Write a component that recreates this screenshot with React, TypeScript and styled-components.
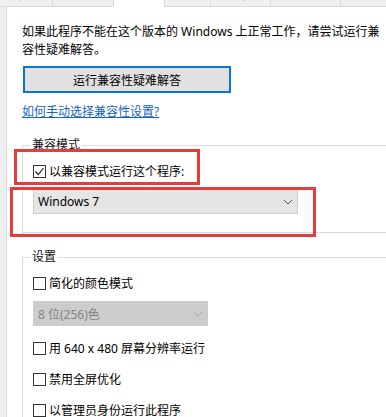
import React from 'react';
import styled, { createGlobalStyle } from 'styled-components';

const GlobalStyle = createGlobalStyle`
  body {
    margin: 0;
    background: #f0f0f0;
    font-family: 'Noto Sans', 'Noto Sans CJK SC', sans-serif;
    font-size: 12px;
    color: #000;
  }
`;

type TabItem = { label: string; width: number; active?: boolean };

const tabs: TabItem[] = [
  { label: '常规', width: 55 },
  { label: '快捷方式', width: 62 },
  { label: '兼容性', width: 52, active: true },
  { label: '安全', width: 47 },
  { label: '详细信息', width: 61 },
  { label: '以前的版本', width: 71 },
];

const App: React.FC = () => {
  return (
    <Root>
      <GlobalStyle />
      <TabStrip>
        {tabs.map((tab) => (
          <Tab key={tab.label} $width={tab.width} $active={tab.active}>
            {tab.label}
          </Tab>
        ))}
        <TabFiller />
      </TabStrip>
      <Panel>
        <Intro>
          <Line>如果此程序不能在这个版本的 Windows 上正常工作，请尝试运行兼</Line>
          <Line>容性疑难解答。</Line>
        </Intro>
        <TroubleshootButton>运行兼容性疑难解答</TroubleshootButton>
        <HelpLink>如何手动选择兼容性设置?</HelpLink>

        <Group>
          <Legend>兼容模式</Legend>
          <CheckRow>
            <CheckBox $checked>
              <svg width='11' height='11' viewBox='0 0 11 11'>
                <polyline points='1.5,5.5 4.3,8.5 9.5,2' fill='none' stroke='#222' strokeWidth='1.2' />
              </svg>
            </CheckBox>
            以兼容模式运行这个程序:
          </CheckRow>
          <Select $width={265}>
            Windows 7
            <Chevron color='#555' />
          </Select>
        </Group>

        <Group>
          <Legend>设置</Legend>
          <CheckRow>
            <CheckBox />
            简化的颜色模式
          </CheckRow>
          <Select $width={175} $disabled>
            8 位(256)色
            <Chevron color='#a8a8a8' />
          </Select>
          <CheckRow $spaced>
            <CheckBox />
            用 640 x 480 屏幕分辨率运行
          </CheckRow>
          <CheckRow $spaced>
            <CheckBox />
            禁用全屏优化
          </CheckRow>
          <CheckRow $spaced>
            <CheckBox />
            以管理员身份运行此程序
          </CheckRow>
        </Group>
      </Panel>

      <Highlight style={{ left: 14, top: 149, width: 186, height: 36 }} />
      <Highlight style={{ left: 10, top: 187, width: 306, height: 50 }} />
    </Root>
  );
};

const Chevron: React.FC<{ color: string }> = ({ color }) => (
  <ChevronBox>
    <svg width='10' height='6' viewBox='0 0 10 6'>
      <polyline points='1,1 5,5 9,1' fill='none' stroke={color} strokeWidth='1' />
    </svg>
  </ChevronBox>
);

const Root = styled.div`
  position: relative;
  width: 386px;
  height: 417px;
  overflow: hidden;
`;

const TabStrip = styled.div`
  display: flex;
  align-items: flex-end;
  height: 7px;
  overflow: hidden;
  margin-left: -1px;
`;

const Tab = styled.div<{ $width: number; $active?: boolean }>`
  flex: none;
  width: ${(p) => p.$width}px;
  height: 22px;
  box-sizing: border-box;
  margin-left: -1px;
  border: 1px solid #d9d9d9;
  border-bottom-color: ${(p) => (p.$active ? '#fff' : '#d9d9d9')};
  background: ${(p) => (p.$active ? '#fff' : '#f0f0f0')};
  color: ${(p) => (p.$active ? 'transparent' : '#000')};
  text-align: center;
  line-height: 18px;
  white-space: nowrap;
`;

const TabFiller = styled.div`
  flex: 1;
  height: 7px;
  box-sizing: border-box;
  border-bottom: 1px solid #d9d9d9;
`;

const Panel = styled.div`
  margin-left: 6px;
  width: 440px;
  min-height: 420px;
  border-left: 1px solid #d9d9d9;
  background: #fff;
  padding: 16px 0 0 15px;
`;

const Intro = styled.div`
  line-height: 18px;
`;

const Line = styled.div`
  white-space: nowrap;
`;

const TroubleshootButton = styled.div`
  margin: 7px 0 0 1px;
  width: 208px;
  height: 27px;
  box-sizing: border-box;
  border: 2px solid #0a74d1;
  background: #e1e1e1;
  display: flex;
  align-items: center;
  justify-content: center;
`;

const HelpLink = styled.div`
  margin-top: 10px;
  line-height: 18px;
  color: #1565c0;
  text-decoration: underline;
`;

const Group = styled.fieldset`
  margin: 15px 0 0 0;
  width: 420px;
  border: 1px solid #dcdcdc;
  padding: 8px 0 18px 10px;
  min-width: 0;
`;

const Legend = styled.legend`
  margin-left: -3px;
  padding: 0 2px;
  line-height: 18px;
  color: #111;
`;

const CheckRow = styled.div<{ $spaced?: boolean }>`
  display: flex;
  align-items: center;
  gap: 3px;
  height: 18px;
  margin-top: ${(p) => (p.$spaced ? 13 : 0)}px;
  white-space: nowrap;
`;

const CheckBox = styled.span<{ $checked?: boolean }>`
  flex: none;
  width: 13px;
  height: 13px;
  box-sizing: border-box;
  border: 1px solid #333;
  background: #fff;
  display: flex;
  align-items: center;
  justify-content: center;
`;

const Select = styled.div<{ $width: number; $disabled?: boolean }>`
  margin-top: 9px;
  width: ${(p) => p.$width}px;
  height: 25px;
  box-sizing: border-box;
  border: 1px solid ${(p) => (p.$disabled ? '#cccccc' : '#cfcfcf')};
  background: ${(p) => (p.$disabled ? '#cccccc' : '#e5e5e5')};
  color: ${(p) => (p.$disabled ? '#838383' : '#000')};
  padding-left: 4px;
  display: flex;
  align-items: center;
  justify-content: space-between;
`;

const ChevronBox = styled.span`
  display: flex;
  align-items: center;
  padding-right: 4px;
`;

const Highlight = styled.div`
  position: absolute;
  box-sizing: border-box;
  border: 3px solid #e53c3c;
  pointer-events: none;
`;

export default App;
